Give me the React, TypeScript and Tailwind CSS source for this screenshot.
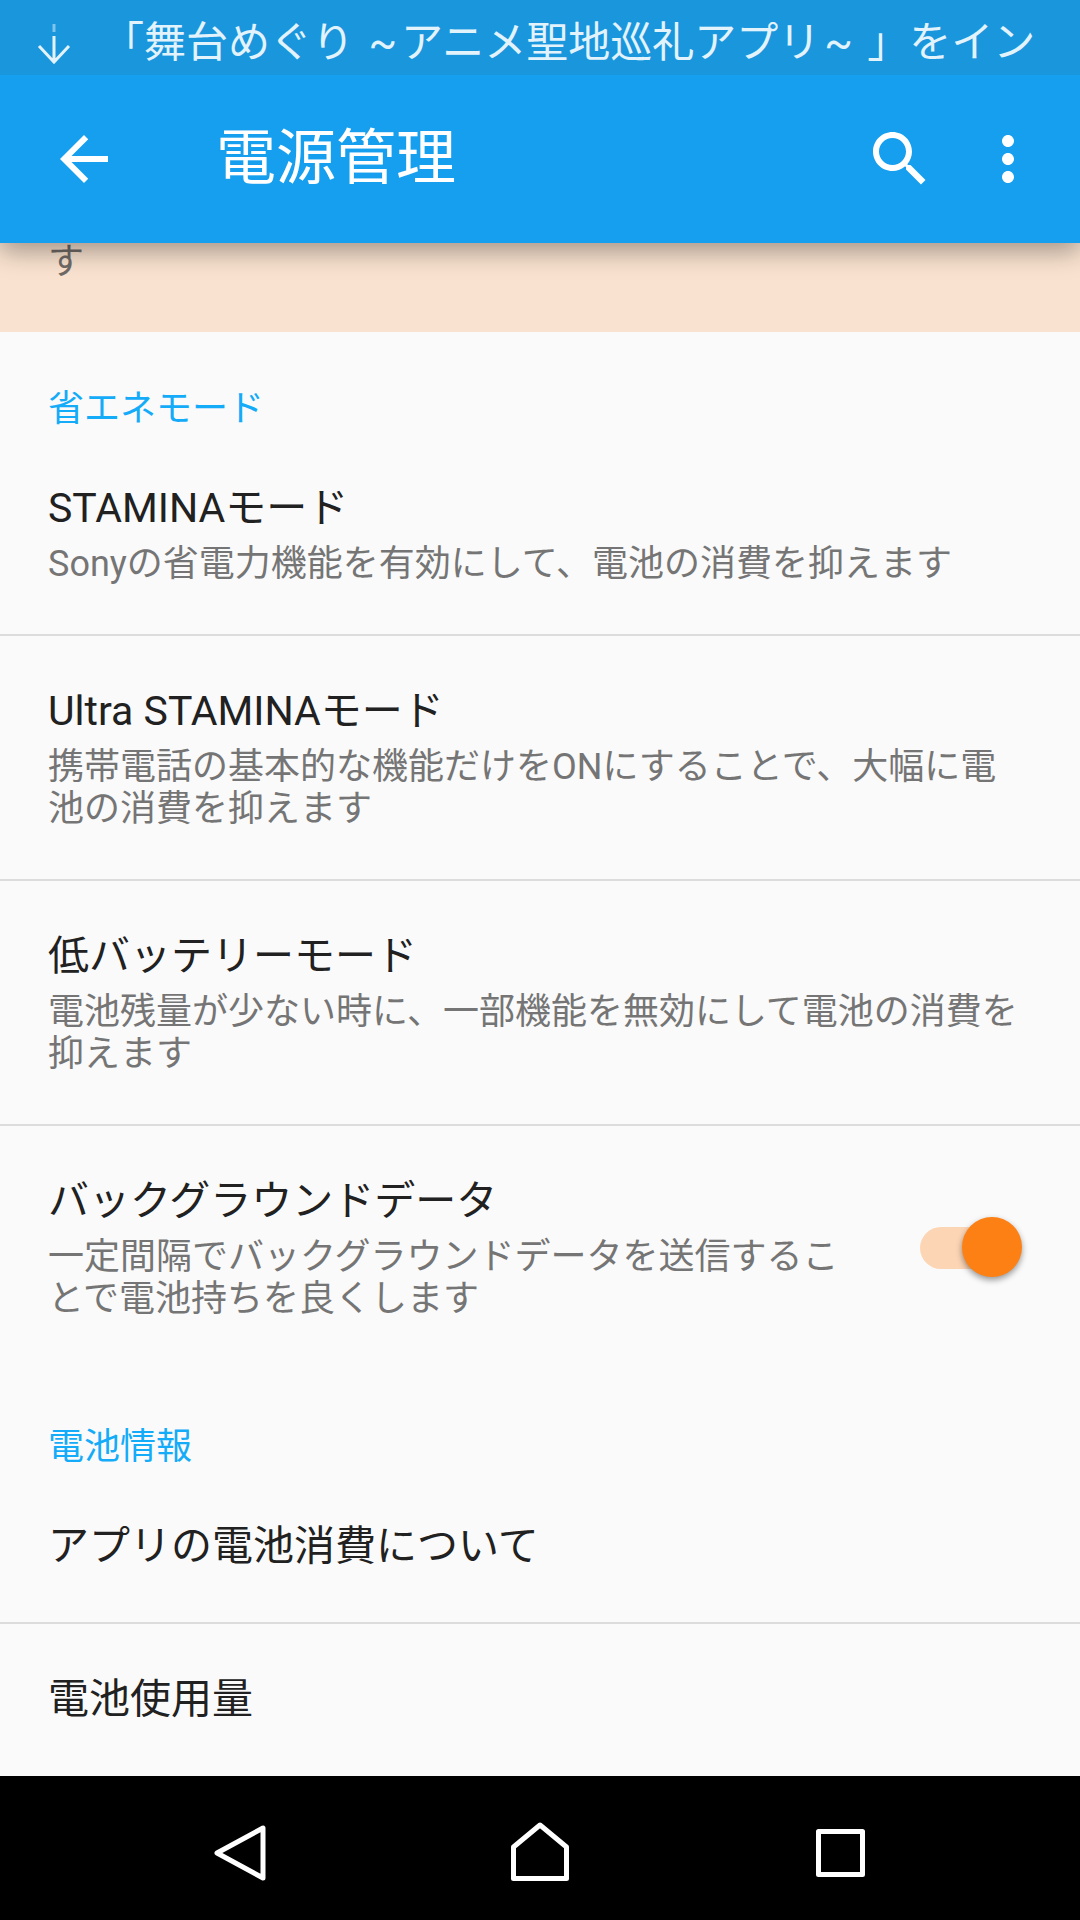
const FONT = "font-['Roboto','Noto_Sans_CJK_JP',sans-serif]";

function Divider() {
  return <div className="h-[2px] bg-[#dcdcdc]" />;
}

function SectionHeader({ label, className }: { label: string; className: string }) {
  return <div className={`text-[36px] leading-[44px] text-[#14abf8] ${className}`}>{label}</div>;
}

function SettingRow({ title, lines, className }: { title: string; lines?: string[]; className: string }) {
  return (
    <div className={`px-[48px] ${className}`}>
      <div className="text-[41px] leading-[52px] text-[#212121]">{title}</div>
      {lines && (
        <div className="mt-[9px] text-[36px] leading-[42px] text-[#757575]">
          {lines.map((line) => (
            <div key={line} className="whitespace-nowrap">
              {line}
            </div>
          ))}
        </div>
      )}
    </div>
  );
}

export default function App() {
  return (
    <div className={`flex h-[1920px] w-[1080px] flex-col overflow-hidden bg-[#fafafa] ${FONT}`}>
      <div className="relative z-20 flex h-[75px] items-center bg-[#1a96dc] pl-[36px] text-[#e3f3fc]">
        <svg width="36" height="44" viewBox="0 0 36 44" fill="none" stroke="currentColor" strokeWidth="3" className="mt-[12px]">
          <path d="M18 2v8" opacity="0.5" />
          <path d="M18 14v26M3 24l15 16 15-16" />
        </svg>
        <div className="ml-[30px] mt-[10px] whitespace-nowrap text-[42px] leading-[50px]">
          「舞台めぐり <span className="mx-[4px]">~</span>アニメ聖地巡礼アプリ<span className="mx-[4px]">~</span> 」をイン
        </div>
      </div>

      <div className="relative z-10 flex h-[168px] items-center gap-[36px] bg-[#169fee] pl-[48px] pr-[36px] text-white shadow-[0_8px_24px_rgba(0,0,0,0.35)]">
        <svg width="72" height="72" viewBox="0 0 24 24" fill="currentColor">
          <path d="M20 11H7.83l5.59-5.59L12 4l-8 8 8 8 1.41-1.41L7.83 13H20v-2z" />
        </svg>
        <div className="ml-[60px] flex-1 text-[60px] leading-[70px]">電源管理</div>
        <svg width="72" height="72" viewBox="0 0 24 24" fill="currentColor">
          <path d="M15.5 14h-.79l-.28-.27C15.41 12.59 16 11.11 16 9.5 16 5.91 13.09 3 9.5 3S3 5.91 3 9.5 5.91 16 9.5 16c1.61 0 3.09-.59 4.23-1.57l.27.28v.79l5 4.99L20.49 19l-4.99-5zm-6 0C7.01 14 5 11.99 5 9.5S7.01 5 9.5 5 14 7.01 14 9.5 11.99 14 9.5 14z" />
        </svg>
        <svg width="72" height="72" viewBox="0 0 24 24" fill="currentColor">
          <path d="M12 8c1.1 0 2-.9 2-2s-.9-2-2-2-2 .9-2 2 .9 2 2 2zm0 2c-1.1 0-2 .9-2 2s.9 2 2 2 2-.9 2-2-.9-2-2-2zm0 6c-1.1 0-2 .9-2 2s.9 2 2 2 2-.9 2-2-.9-2-2-2z" />
        </svg>
      </div>

      <div className="h-[89px] bg-[#f9e2cf] pl-[48px] text-[36px] leading-[38px] text-[#6f6a66]">す</div>

      <SectionHeader label="省エネモード" className="mt-[55px] px-[48px]" />
      <SettingRow title="STAMINAモード" lines={['Sonyの省電力機能を有効にして、電池の消費を抑えます']} className="mt-[51px] h-[152px]" />
      <Divider />
      <SettingRow
        title="Ultra STAMINAモード"
        lines={['携帯電話の基本的な機能だけをONにすることで、大幅に電', '池の消費を抑えます']}
        className="h-[243px] pt-[49px]"
      />
      <Divider />
      <SettingRow
        title="低バッテリーモード"
        lines={['電池残量が少ない時に、一部機能を無効にして電池の消費を', '抑えます']}
        className="h-[243px] pt-[49px]"
      />
      <Divider />
      <div className="relative">
        <SettingRow
          title="バックグラウンドデータ"
          lines={['一定間隔でバックグラウンドデータを送信するこ', 'とで電池持ちを良くします']}
          className="h-[299px] pt-[49px]"
        />
        <div className="absolute left-[920px] top-[101px] h-[42px] w-[78px] rounded-full bg-[#fcd5b5]" />
        <div className="absolute left-[962px] top-[91px] h-[60px] w-[60px] rounded-full bg-[#fd8014] shadow-[0_3px_6px_rgba(0,0,0,0.4)]" />
      </div>

      <SectionHeader label="電池情報" className="px-[48px]" />
      <SettingRow title="アプリの電池消費について" className="mt-[51px] h-[102px]" />
      <Divider />
      <SettingRow title="電池使用量" className="h-[150px] pt-[49px]" />

      <div className="mt-auto flex h-[144px] shrink-0 items-start bg-black pl-[214px] text-white">
        <svg className="mt-[49px]" width="52" height="56" viewBox="0 0 52 56" fill="none" stroke="currentColor" strokeWidth="5" strokeLinejoin="round">
          <path d="M49 3v50L3 28z" />
        </svg>
        <svg className="ml-[245px] mt-[46px]" width="58" height="59" viewBox="0 0 58 59" fill="none" stroke="currentColor" strokeWidth="5" strokeLinejoin="round">
          <path d="M29 3L55.5 25V56.5H2.5V25z" />
        </svg>
        <svg className="ml-[247px] mt-[53px]" width="49" height="48" viewBox="0 0 49 48" fill="none" stroke="currentColor" strokeWidth="5" strokeLinejoin="round">
          <rect x="2.5" y="2.5" width="44" height="43" />
        </svg>
      </div>
    </div>
  );
}
